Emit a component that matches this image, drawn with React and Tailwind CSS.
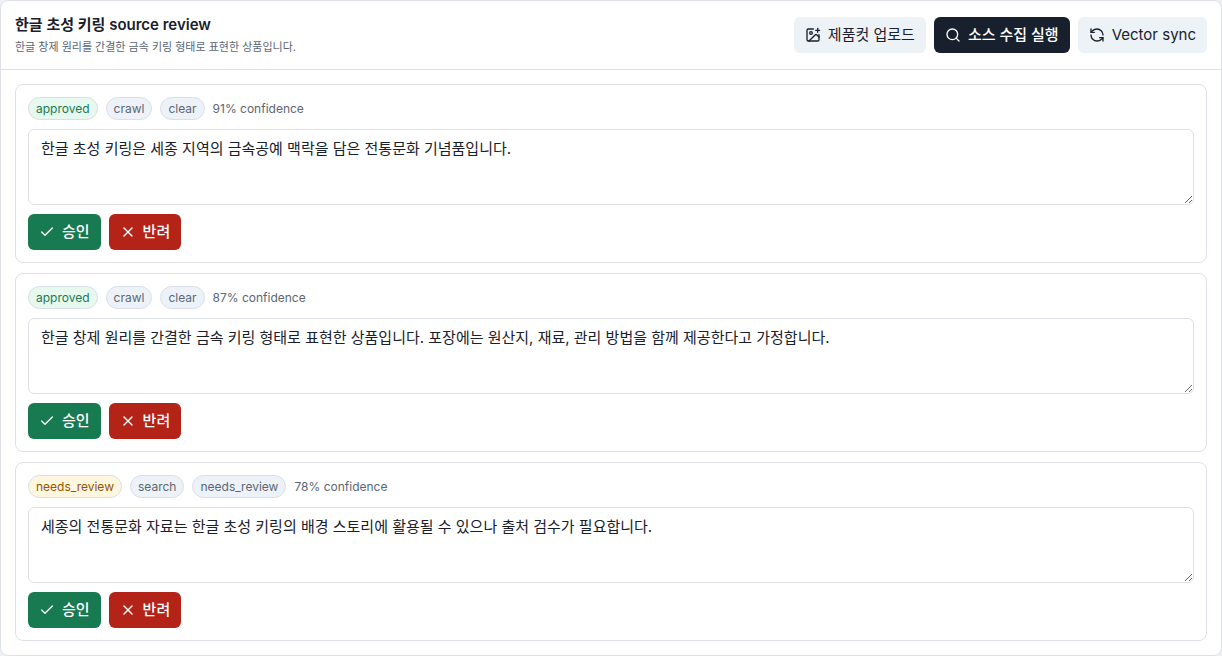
import { useState } from 'react';
import { Check, ImagePlus, RefreshCcw, Search, X } from 'lucide-react';

const sources = [
  {
    id: 1,
    status: 'approved',
    method: 'crawl',
    license: 'clear',
    confidence: 91,
    text: '한글 초성 키링은 세종 지역의 금속공예 맥락을 담은 전통문화 기념품입니다.',
  },
  {
    id: 2,
    status: 'approved',
    method: 'crawl',
    license: 'clear',
    confidence: 87,
    text: '한글 창제 원리를 간결한 금속 키링 형태로 표현한 상품입니다. 포장에는 원산지, 재료, 관리 방법을 함께 제공한다고 가정합니다.',
  },
  {
    id: 3,
    status: 'needs_review',
    method: 'search',
    license: 'needs_review',
    confidence: 78,
    text: '세종의 전통문화 자료는 한글 초성 키링의 배경 스토리에 활용될 수 있으나 출처 검수가 필요합니다.',
  },
];

const badgeTones = {
  approved: 'bg-[#e7f8ef] text-[#187a50]',
  needs_review: 'bg-[#fff6df] text-[#955500]',
  neutral: 'bg-[#edf2f8] text-[#5b6675]',
};

const buttonTones = {
  light: 'bg-[#edf2f7] text-[#18202c]',
  dark: 'bg-[#17202c] text-white font-medium',
  approve: 'bg-[#187a50] text-white font-medium',
  reject: 'bg-[#b42318] text-white font-medium',
};

function Badge({ tone = 'neutral', children }) {
  return (
    <span className={`rounded-full border border-[#d9dfe8] px-[7px] py-0.5 leading-[17px] ${badgeTones[tone]}`}>
      {children}
    </span>
  );
}

function Button({ tone, icon: Icon, children }) {
  return (
    <button
      type="button"
      className={`flex h-9 cursor-pointer items-center gap-[7px] rounded-md px-[11px] text-[15px] ${buttonTones[tone]}`}
    >
      <Icon className="size-4 shrink-0" strokeWidth={2} />
      {children}
    </button>
  );
}

function SourceCard({ source }) {
  const [text, setText] = useState(source.text);

  return (
    <article className="flex flex-col gap-[9px] rounded-lg border border-[#dde1e6] p-3">
      <div className="flex flex-wrap items-center gap-2 text-xs text-[#5b6675]">
        <Badge tone={source.status}>{source.status}</Badge>
        <Badge>{source.method}</Badge>
        <Badge>{source.license}</Badge>
        <span>{source.confidence}% confidence</span>
      </div>
      <textarea
        aria-label="Source text"
        value={text}
        onChange={(e) => setText(e.target.value)}
        className="block h-[76px] w-full resize-y rounded-md border border-[#dde1e6] bg-white px-3 py-2 text-[15px] leading-[22px]"
      />
      <div className="flex gap-2">
        <Button tone="approve" icon={Check}>승인</Button>
        <Button tone="reject" icon={X}>반려</Button>
      </div>
    </article>
  );
}

export default function App() {
  return (
    <div className="bg-[#eef2f6] font-[Inter,'Noto_Sans_CJK_KR',sans-serif] text-[#18202c]">
      <section className="rounded-lg border border-[#dde1e6] bg-white">
        <header className="flex items-center justify-between gap-3 border-b border-[#dde1e6] px-3.5 py-3.5">
          <div>
            <h2 className="text-[15px] leading-5 font-semibold">한글 초성 키링 source review</h2>
            <p className="mt-1 text-[11px] leading-4 text-[#5b6675]">
              한글 창제 원리를 간결한 금속 키링 형태로 표현한 상품입니다.
            </p>
          </div>
          <div className="flex gap-2">
            <Button tone="light" icon={ImagePlus}>제품컷 업로드</Button>
            <Button tone="dark" icon={Search}>소스 수집 실행</Button>
            <Button tone="light" icon={RefreshCcw}>Vector sync</Button>
          </div>
        </header>
        <div className="flex flex-col gap-2.5 p-3.5">
          {sources.map((source) => (
            <SourceCard key={source.id} source={source} />
          ))}
        </div>
      </section>
    </div>
  );
}
